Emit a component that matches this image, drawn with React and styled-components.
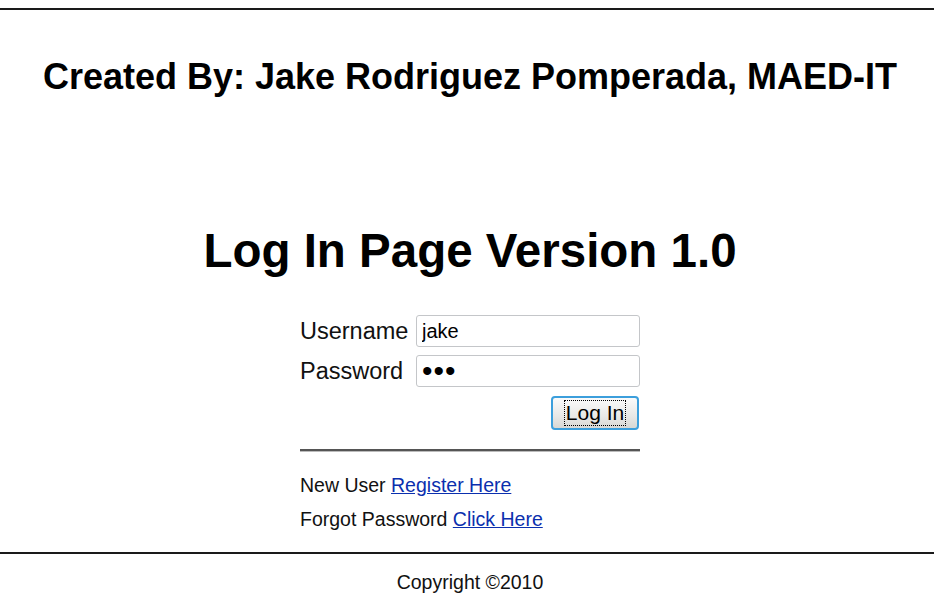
import React from "react";
import styled, { createGlobalStyle } from "styled-components";

const Global = createGlobalStyle`
  html, body { margin: 0; padding: 0; background: #fff; }
  body { font-family: "Liberation Sans", Arial, sans-serif; color: #000; }
`;

const Page = styled.div`
  width: 934px;
  height: 606px;
  padding-top: 8px;
  box-sizing: border-box;
  display: flex;
  flex-direction: column;
`;

const Rule = styled.div`
  height: 2px;
  background: #1a1a1a;
  margin-top: ${(p) => p.$top || 0}px;
`;

const Credit = styled.h2`
  margin: 46px 0 0;
  padding-left: 6px;
  text-align: center;
  font-size: 36px;
  font-weight: bold;
  line-height: 41px;
`;

const Title = styled.h1`
  margin: 127px 0 0;
  padding-left: 6px;
  text-align: center;
  font-size: 47.5px;
  font-weight: bold;
  line-height: 54px;
`;

const FormWrap = styled.div`
  margin-top: 37px;
  padding-left: 6px;
  display: flex;
  justify-content: center;
`;

const Form = styled.form`
  width: 340px;
  display: flex;
  flex-direction: column;
`;

const Grid = styled.div`
  display: grid;
  grid-template-columns: 116px 224px;
  row-gap: 8px;
  align-items: center;
`;

const Label = styled.label`
  font-size: 23.5px;
  color: #111;
`;

const Input = styled.input`
  box-sizing: border-box;
  width: 224px;
  height: 32px;
  border: 1px solid #c4c6c9;
  border-radius: 3px;
  padding: 0 5px;
  font-family: "Liberation Sans", Arial, sans-serif;
  font-size: ${(p) => (p.type === "password" ? "30px" : "20px")};
  color: #000;
  background: #fff;
  outline: none;
  letter-spacing: ${(p) => (p.type === "password" ? "1px" : "0")};
`;

const ButtonRow = styled.div`
  display: flex;
  justify-content: flex-end;
  margin-top: 9px;
`;

const Button = styled.button`
  box-sizing: border-box;
  width: 88px;
  height: 34px;
  border: 2px solid #3c9fdc;
  border-radius: 4px;
  background: linear-gradient(#fbfbfb, #e8e8e6 60%, #d8d8d4);
  font-family: "Liberation Sans", Arial, sans-serif;
  font-size: 21px;
  color: #000;
  padding: 0;
  display: flex;
  align-items: center;
  justify-content: center;
  margin-right: 1px;
`;

const FocusText = styled.span`
  border: 1px dotted #000;
  padding: 0 1px;
  line-height: 24px;
`;

const Hr = styled.div`
  height: 2px;
  background: #555;
  border-bottom: 1px solid #bbb;
  margin-top: 19px;
`;

const Links = styled.div`
  margin-top: 22px;
  display: flex;
  flex-direction: column;
  gap: 11px;
  font-size: 19.5px;
  line-height: 23px;
  color: #111;
`;

const A = styled.a`
  color: #0b2fae;
  text-decoration: underline;
`;

const Footer = styled.div`
  margin-top: 17px;
  padding-left: 6px;
  text-align: center;
  font-size: 19.5px;
  color: #111;
`;

export default function App() {
  return (
    <Page>
      <Global />
      <Rule />
      <Credit>Created By: Jake Rodriguez Pomperada, MAED-IT</Credit>
      <Title>Log In Page Version 1.0</Title>
      <FormWrap>
        <Form onSubmit={(e) => e.preventDefault()}>
          <Grid>
            <Label>Username</Label>
            <Input type="text" defaultValue="jake" />
            <Label>Password</Label>
            <Input type="password" defaultValue="abc" />
          </Grid>
          <ButtonRow>
            <Button type="submit">
              <FocusText>Log In</FocusText>
            </Button>
          </ButtonRow>
          <Hr />
          <Links>
            <div>
              New User <A href="#">Register Here</A>
            </div>
            <div>
              Forgot Password <A href="#">Click Here</A>
            </div>
          </Links>
        </Form>
      </FormWrap>
      <Rule $top={21} />
      <Footer>Copyright ©2010</Footer>
    </Page>
  );
}
